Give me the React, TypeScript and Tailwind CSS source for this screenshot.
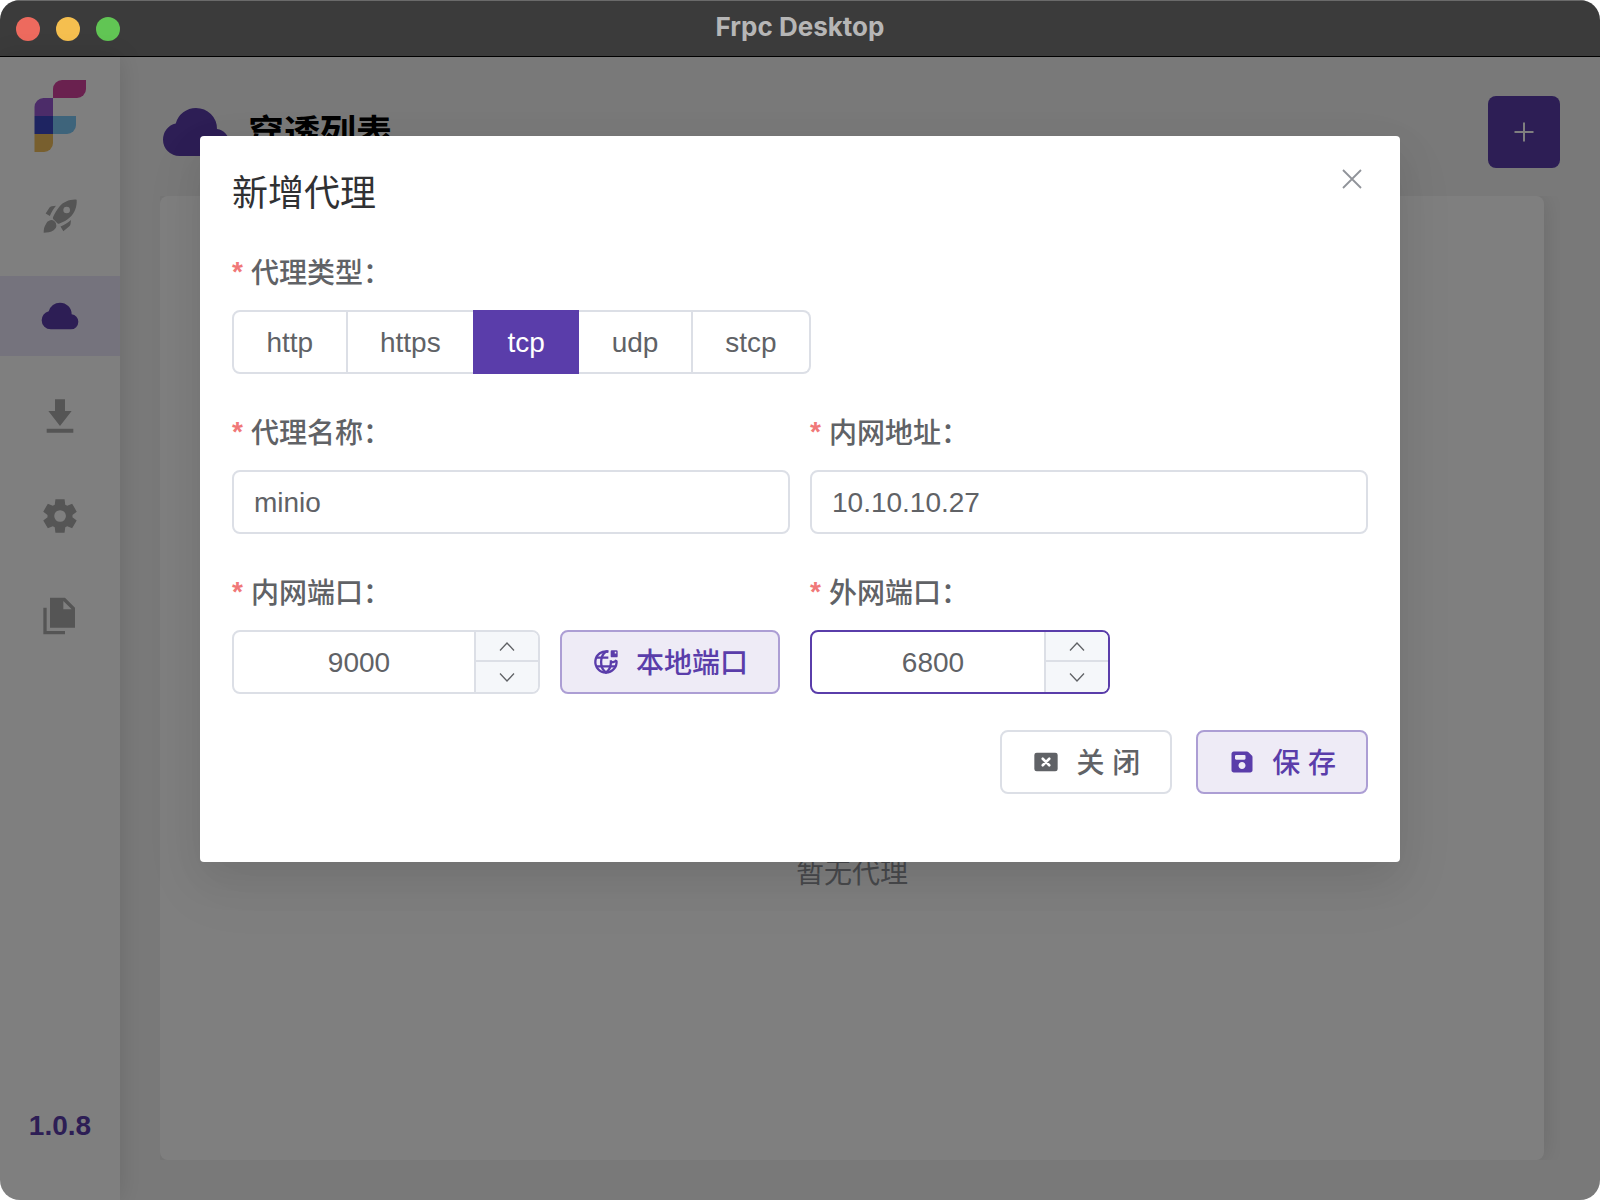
import React, { useState } from 'react';
import clsx from 'clsx';

type IconProps = { className?: string };

const Icon = ({ className, children }: IconProps & { children: React.ReactNode }) => (
	<svg viewBox="0 0 24 24" fill="currentColor" aria-hidden="true" className={clsx('shrink-0', className)}>
		{children}
	</svg>
);

const RocketIcon = ({ className }: IconProps) => (
	<Icon className={className}>
		<path
			d="M22 2.2C18 1.8 14 3.6 11.7 6.3 10 8.4 8.6 10.8 7.8 12.8q-.3.7.2 1.2l2.4 2.3q.6.5 1.3.2c2.3-.8 4.5-1.9 6.3-3.7C20.8 10.2 22.3 6.4 22 2.2zM16 6.4a2 2 0 1 1 0 4 2 2 0 0 1 0-4z"
			fillRule="evenodd"
		/>
		<path d="M3.4 10.5l2.3-3.6q.5-.7 1.3-.8l2.6-.3C8.2 7.6 6.8 9.7 5.9 12z" />
		<path d="M12.3 18.3c2.3-.9 4.3-2.2 6.3-3.9l-.3 2.5q-.1.7-.7 1.2L14 21.2z" />
		<path d="M2.2 22c0-1.9.3-3.8 1.4-5.2a3.2 3.2 0 1 1 4.6 3.7C6.6 21.6 4.3 22 2.2 22z" />
	</Icon>
);

const CloudIcon = ({ className }: IconProps) => (
	<Icon className={className}>
		<path d="M6.5 20q-2.28 0-3.89-1.57Q1 16.85 1 14.58q0-1.95 1.17-3.48 1.18-1.53 3.08-1.95.63-2.3 2.5-3.72Q9.63 4 12 4q2.93 0 4.96 2.04Q19 8.07 19 11q1.73.2 2.86 1.5 1.14 1.28 1.14 3 0 1.88-1.31 3.19T18.5 20Z" />
	</Icon>
);

const DownloadIcon = ({ className }: IconProps) => (
	<Icon className={className}>
		<path d="M4 22v-2.4h16V22zm8-4L5 9h4V2h6v7h4z" />
	</Icon>
);

const SettingsIcon = ({ className }: IconProps) => (
	<Icon className={className}>
		<path d="m9.25 22l-.4-3.2q-.325-.125-.612-.3t-.563-.375L4.7 19.375l-2.75-4.75l2.575-1.95Q4.5 12.5 4.5 12.338v-.675q0-.163.025-.338L1.95 9.375l2.75-4.75l2.975 1.25q.275-.2.575-.375t.6-.3l.4-3.2h5.5l.4 3.2q.325.125.613.3t.562.375l2.975-1.25l2.75 4.75l-2.575 1.95q.025.175.025.338v.674q0 .163-.05.338l2.575 1.95l-2.75 4.75l-2.95-1.25q-.275.2-.575.375t-.6.3l-.4 3.2zm2.8-6.5q1.45 0 2.475-1.025T15.55 12t-1.025-2.475T12.05 8.5q-1.475 0-2.488 1.025T8.55 12t1.013 2.475T12.05 15.5" />
	</Icon>
);

const FilesIcon = ({ className }: IconProps) => (
	<Icon className={className}>
		<path d="M2 23V7h2v14h11v2zM6 19V1h9l6 6v12zM14 3v5h5z" fillRule="evenodd" />
	</Icon>
);

const GlobeIcon = ({ className }: IconProps) => (
	<Icon className={className}>
		<g fill="none" stroke="currentColor" strokeWidth="2">
			<path d="M14 3.1A9.1 9.1 0 1 0 21 11" />
			<path d="M12 3C9.2 5 7.8 8.2 7.8 12s1.4 7 4.2 9c2.8-2 4.2-5.2 4.2-9v-1.5" />
			<path d="M12 3h2M3.6 8.2H14M3.6 15.8h16.8M16.2 12.2q4 0 4.6-2" />
		</g>
		<path d="M17 2h4q1 0 1 1v4q0 1-1 1h-4q-1 0-1-1V3q0-1 1-1zm2.5 1.3v1.5h1.3V3.3z" fillRule="evenodd" />
	</Icon>
);

const CloseBoxIcon = ({ className }: IconProps) => (
	<Icon className={className}>
		<rect x="2" y="4" width="20" height="16" rx="2" />
		<path d="M9.2 9.2l5.6 5.6M14.8 9.2l-5.6 5.6" stroke="#fff" strokeWidth="2.2" strokeLinecap="round" />
	</Icon>
);

const SaveIcon = ({ className }: IconProps) => (
	<Icon className={className}>
		<path d="M5 21q-.825 0-1.412-.587T3 19V5q0-.825.588-1.412T5 3h11.175q.4 0 .763.15t.637.425l2.85 2.85q.275.275.425.638t.15.762V19q0 .825-.587 1.413T19 21zm7-3q1.25 0 2.125-.875T15 15t-.875-2.125T12 12t-2.125.875T9 15t.875 2.125T12 18m-5-8h7q.425 0 .713-.288T15 9V7q0-.425-.288-.712T14 6H7q-.425 0-.712.288T6 7v2q0 .425.288.713T7 10" />
	</Icon>
);

const Logo = () => (
	<svg viewBox="0 0 52 72" className="h-[72px] w-[52px]" role="img" aria-label="Frpc Desktop">
		<path d="M19 18v-9a9 9 0 0 1 9-9h24v9a9 9 0 0 1-9 9z" fill="#d4439f" />
		<path d="M.5 36V27a9 9 0 0 1 9-9H19v18z" fill="#9859d2" />
		<path d="M.5 36H19v18H.5z" fill="#3c49c2" />
		<path d="M19 36h23v9a9 9 0 0 1-9 9H19z" fill="#7cc8f6" />
		<path d="M.5 54H19v9a9 9 0 0 1-9 9H.5z" fill="#f0be5c" />
	</svg>
);

const menus = [
	{ key: 'home', label: '连接', icon: RocketIcon },
	{ key: 'proxy', label: '穿透列表', icon: CloudIcon },
	{ key: 'download', label: '下载', icon: DownloadIcon },
	{ key: 'config', label: '设置', icon: SettingsIcon },
	{ key: 'logger', label: '日志', icon: FilesIcon },
];

const TitleBar = () => (
	<header className="relative flex h-[57px] items-center justify-center border-t border-b border-t-[#6a6a6a] border-b-black bg-[#3b3b3b]">
		<div className="absolute left-4 flex gap-4">
			<span className="size-6 rounded-full bg-[#ed6a5e]" />
			<span className="size-6 rounded-full bg-[#f5bf4f]" />
			<span className="size-6 rounded-full bg-[#61c554]" />
		</div>
		<h1 className="pb-1 font-[Inter,sans-serif] text-[26px] leading-8 font-bold text-[#b6b6b6]">Frpc Desktop</h1>
	</header>
);

const SideMenu = () => (
	<aside className="relative z-10 flex w-[120px] shrink-0 flex-col bg-white shadow-[0_0_24px_rgba(0,0,0,0.12)]">
		<div className="flex justify-center pt-[23px]">
			<Logo />
		</div>
		<nav className="mt-6 flex flex-col gap-5">
			{menus.map(({ key, label, icon: MenuIcon }) => (
				<a
					key={key}
					href={`#${key}`}
					aria-label={label}
					className={clsx(
						'flex h-20 items-center justify-center',
						key === 'proxy' ? 'bg-[#ebe6fa] text-[#5a3daa]' : 'text-[#aaaaaa]'
					)}
				>
					<MenuIcon className="size-10" />
				</a>
			))}
		</nav>
		<div className="mt-auto pb-[54px] text-center text-[28px] leading-10 font-bold text-[#5a3daa]">1.0.8</div>
	</aside>
);

const ProxyList = () => (
	<main className="flex grow flex-col bg-[#f3f3f3] px-10 pt-[39px] pb-10">
		<div className="flex items-center">
			<CloudIcon className="size-[72px] text-[#5a3daa]" />
			<h2 className="ml-4 pt-1 text-[36px] leading-[48px] font-bold text-black">穿透列表</h2>
			<button
				type="button"
				aria-label="新增"
				className="ml-auto flex size-[72px] items-center justify-center rounded-lg bg-[#5a3daa] text-white"
			>
				<svg viewBox="0 0 20 20" className="size-5" stroke="currentColor" strokeWidth="2" aria-hidden="true">
					<path d="M10 0.5v19M0.5 10h19" />
				</svg>
			</button>
		</div>
		<div className="mt-7 flex grow overflow-hidden pr-4">
			<div className="flex grow flex-col items-center justify-center rounded-lg bg-white shadow-[0_0_24px_rgba(0,0,0,0.12)]">
				<div className="h-[392px]" />
				<p className="text-[28px] leading-10 text-[#909399]">暂无代理</p>
			</div>
		</div>
	</main>
);

const Field = ({ label, htmlFor, children }: { label: string; htmlFor: string; children: React.ReactNode }) => (
	<div>
		<label htmlFor={htmlFor} className="mb-3 flex text-[28px] leading-[48px] font-medium text-[#606266]">
			<span className="mr-2 leading-[44px] font-bold text-[#f07878]">*</span>
			{label}
		</label>
		{children}
	</div>
);

const TextInput = ({ id, defaultValue }: { id: string; defaultValue: string }) => (
	<input
		id={id}
		type="text"
		defaultValue={defaultValue}
		className="block h-16 w-full rounded-lg border-2 border-[#dcdfe6] bg-white px-5 pt-0.5 text-[28px] text-[#606266] outline-none"
	/>
);

const NumberInput = ({ id, initial, active, className }: { id: string; initial: number; active?: boolean; className: string }) => {
	const [value, setValue] = useState(initial);
	return (
		<div
			className={clsx(
				'flex h-16 overflow-hidden rounded-lg border-2',
				active ? 'border-[#5a3daa]' : 'border-[#dcdfe6]',
				className
			)}
		>
			<input
				id={id}
				type="text"
				inputMode="numeric"
				value={value}
				onChange={(e) => setValue(Number(e.target.value) || 0)}
				className="w-0 grow pt-0.5 pl-2.5 text-center text-[28px] text-[#606266] outline-none"
			/>
			<div className="flex w-16 shrink-0 flex-col border-l-2 border-[#dcdfe6] bg-[#f5f7fa] text-[#606266]">
				<button
					type="button"
					aria-label="增加"
					onClick={() => setValue(value + 1)}
					className="flex h-[30px] items-center justify-center border-b-2 border-[#dcdfe6]"
				>
					<svg viewBox="0 0 16 10" className="h-[10px] w-4" fill="none" stroke="currentColor" strokeWidth="1.3">
						<path d="M1 9.5l7-7.5 7 7.5" />
					</svg>
				</button>
				<button
					type="button"
					aria-label="减少"
					onClick={() => setValue(value - 1)}
					className="flex h-[30px] items-center justify-center"
				>
					<svg viewBox="0 0 16 10" className="h-[10px] w-4" fill="none" stroke="currentColor" strokeWidth="1.3">
						<path d="M1 1.5l7 7.5 7-7.5" />
					</svg>
				</button>
			</div>
		</div>
	);
};

const PlainButton = ({ primary, icon, children }: { primary?: boolean; icon: React.ReactNode; children: React.ReactNode }) => (
	<button
		type="button"
		className={clsx(
			'flex h-16 shrink-0 items-center gap-4 rounded-lg border-2 px-[30px] text-[28px] font-medium whitespace-nowrap',
			primary ? 'border-[#ac9ed4] bg-[#eeebf6] text-[#5a3daa]' : 'border-[#dcdfe6] bg-white text-[#606266]'
		)}
	>
		{icon}
		<span className="pt-1">{children}</span>
	</button>
);

const types = ['http', 'https', 'tcp', 'udp', 'stcp'];

const TypeGroup = () => {
	const [type, setType] = useState('tcp');
	return (
		<div className="flex h-16 w-[579px] max-w-full">
			{types.map((t) => (
				<label
					key={t}
					className={clsx(
						'flex flex-auto cursor-pointer items-center justify-center border-y-2 border-r-2 pt-0.5 text-[28px] first:rounded-l-lg first:border-l-2 last:rounded-r-lg',
						t === type ? 'border-[#5a3daa] bg-[#5a3daa] text-white' : 'border-[#dcdfe6] bg-white text-[#606266]',
						// the ticked option covers the divider on its left
						t === type && 'relative not-first:-ml-0.5 not-first:border-l-2'
					)}
				>
					<input
						id={`type-${t}`}
						type="radio"
						name="type"
						value={t}
						checked={t === type}
						onChange={() => setType(t)}
						className="sr-only"
					/>
					{t}
				</label>
			))}
		</div>
	);
};

const ProxyDialog = () => (
	<div
		role="dialog"
		aria-label="新增代理"
		className="relative mx-auto mt-[79px] w-3/4 rounded bg-white px-8 pt-8 pb-[68px] shadow-[0_24px_64px_8px_rgba(0,0,0,0.04),0_16px_40px_rgba(0,0,0,0.08)]"
	>
		<h3 className="mb-[30px] text-[36px] leading-[52px] text-[#303133]">新增代理</h3>
		<button type="button" aria-label="关闭" className="absolute top-[33px] right-9 px-0.5 text-[#909399]">
			<svg viewBox="0 0 20 20" className="size-5" stroke="currentColor" strokeWidth="1.8" aria-hidden="true">
				<path d="M1 1l18 18M19 1L1 19" />
			</svg>
		</button>
		<form className="grid grid-cols-2 gap-x-5 gap-y-9">
			<div className="col-span-2">
				<Field label="代理类型：" htmlFor="type-tcp">
					<TypeGroup />
				</Field>
			</div>
			<Field label="代理名称：" htmlFor="name">
				<TextInput id="name" defaultValue="minio" />
			</Field>
			<Field label="内网地址：" htmlFor="local-ip">
				<TextInput id="local-ip" defaultValue="10.10.10.27" />
			</Field>
			<Field label="内网端口：" htmlFor="local-port">
				<div className="flex gap-5 pr-[10px]">
					<NumberInput id="local-port" initial={9000} className="grow" />
					<PlainButton primary icon={<GlobeIcon className="size-7" />}>
						本地端口
					</PlainButton>
				</div>
			</Field>
			<Field label="外网端口：" htmlFor="remote-port">
				<NumberInput id="remote-port" initial={6800} active className="w-[300px]" />
			</Field>
			<div className="col-span-2 flex justify-end gap-6">
				<PlainButton icon={<CloseBoxIcon className="size-7" />}>关 闭</PlainButton>
				<PlainButton primary icon={<SaveIcon className="size-7" />}>
					保 存
				</PlainButton>
			</div>
		</form>
	</div>
);

const App = () => {
	return (
		<div className="min-h-screen bg-white font-['Liberation_Sans','Noto_Sans_CJK_SC',sans-serif]" lang="zh-CN">
			<div className="flex min-h-screen flex-col overflow-hidden rounded-[20px]">
				<TitleBar />
				<div className="relative flex grow">
					<SideMenu />
					<ProxyList />
					<div className="absolute inset-0 z-20 overflow-auto bg-black/50">
						<ProxyDialog />
					</div>
				</div>
			</div>
		</div>
	);
};

export default App;
